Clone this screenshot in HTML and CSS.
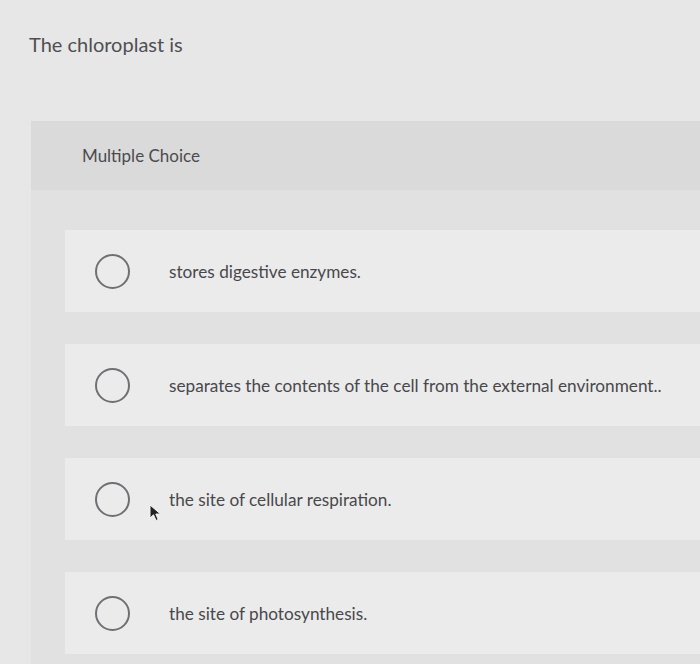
FILE: index.html
```html
<!DOCTYPE html>
<html lang="en">
<head>
    <meta charset="UTF-8">
    <title>The chloroplast is</title>
    <link rel="stylesheet" href="styles.css">
</head>
<body>
    <div class="question">The chloroplast is</div>

    <div class="panel">
        <div class="panel-head">Multiple Choice</div>

        <ul class="choices">
            <li class="choice">
                <span class="radio"></span>
                <span class="label">stores digestive enzymes.</span>
            </li>
            <li class="choice">
                <span class="radio"></span>
                <span class="label">separates the contents of the cell from the external environment..</span>
            </li>
            <li class="choice">
                <span class="radio"></span>
                <span class="label">the site of cellular respiration.</span>
                <svg class="cursor" width="14" height="18" viewBox="0 0 14 18">
                    <path d="M1 1 L1 14 L4.5 10.8 L7 16.5 L9.2 15.5 L6.8 10 L11.5 10 Z" fill="#222" stroke="#f2f2f2" stroke-width="1"/>
                </svg>
            </li>
            <li class="choice">
                <span class="radio"></span>
                <span class="label">the site of photosynthesis.</span>
            </li>
        </ul>
    </div>
</body>
</html>
```

FILE: styles.css
```css
body {
    margin: 0;
    background-color: #e7e7e7;
    font-family: Lato, "Open Sans", Arial, sans-serif;
    color: #474749;
    overflow: hidden;
}
.question {
    padding: 31px 0 0 29px;
    font-size: 20px;
    line-height: 26px;
    color: #4f4f52;
}
.panel {
    margin: 64px 0 0 31px;
    padding-bottom: 30px;
    background-color: #e1e1e1;
}
.panel-head {
    height: 69px;
    padding-left: 51px;
    display: flex;
    align-items: center;
    font-size: 17px;
    color: #4b4b4e;
    background-color: #dadada;
}
.choices {
    list-style: none;
    margin: 0;
    padding: 40px 0 0 34px;
    display: flex;
    flex-direction: column;
    gap: 32px;
}
.choice {
    position: relative;
    height: 82px;
    padding-left: 30px;
    display: flex;
    align-items: center;
    background-color: #ebebeb;
}
.radio {
    width: 31px;
    height: 31px;
    border: 2px solid #707074;
    border-radius: 50%;
    flex-shrink: 0;
}
.label {
    margin-left: 39px;
    font-size: 17.2px;
    color: #48484b;
}
.cursor {
    position: absolute;
    left: 84px;
    top: 46px;
}
```
